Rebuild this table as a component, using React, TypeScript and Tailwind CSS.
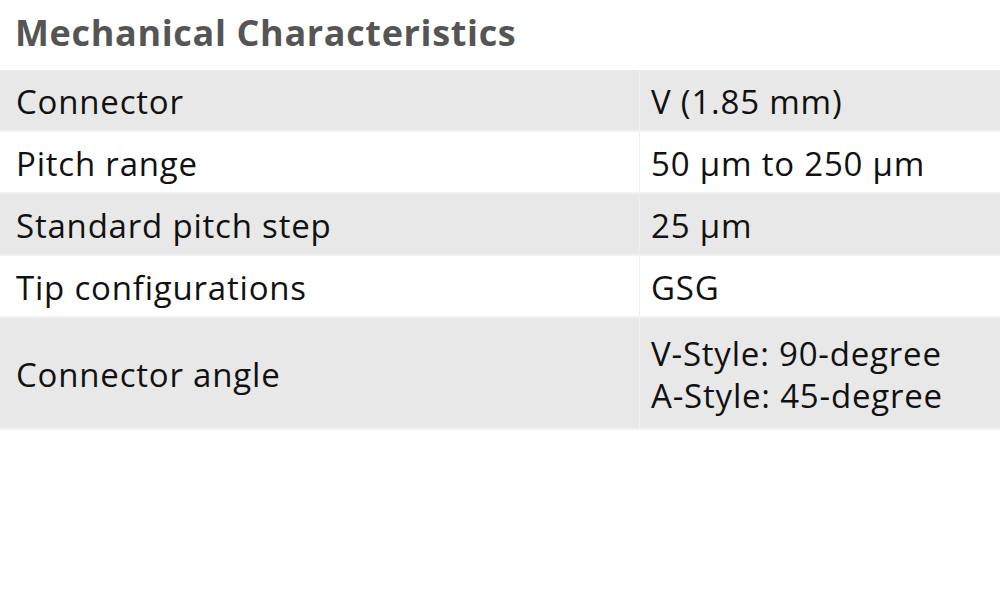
import React from "react";

const rows: { k: string; v: string[]; tall?: boolean }[] = [
  { k: "Connector", v: ["V (1.85 mm)"] },
  { k: "Pitch range", v: ["50 µm to 250 µm"] },
  { k: "Standard pitch step", v: ["25 µm"] },
  { k: "Tip configurations", v: ["GSG"] },
  { k: "Connector angle", v: ["V-Style: 90-degree", "A-Style: 45-degree"], tall: true },
];

export default function App() {
  return (
    <div className="w-[1000px] h-[600px] bg-white" style={{ fontFamily: '"Open Sans", "Noto Sans", sans-serif' }}>
      <div className="h-[70px] pl-[15px] pt-[8px] text-[36px] font-bold text-[#555555] tracking-[0.65px] leading-[50px]">
        Mechanical Characteristics
      </div>
      <div className="flex flex-col">
        {rows.map((r, i) => (
          <div
            key={r.k}
            className={`grid grid-cols-[640px_360px] border-b-2 border-[#f2f2f2] ${i % 2 === 0 ? "bg-[#e8e8e8]" : "bg-white"} ${r.tall ? "h-[112px]" : "h-[62px]"}`}
          >
            <div className="flex items-center pl-[16px] pt-[3px] text-[33px] text-[#111111] tracking-[0.8px] border-r border-[#f0f0f0]">
              {r.k}
            </div>
            <div className="flex flex-col justify-center pl-[11px] pt-[3px] text-[33px] text-[#111111] tracking-[0.8px] leading-[42px]">
              {r.v.map((t) => (
                <div key={t}>{t}</div>
              ))}
            </div>
          </div>
        ))}
      </div>
    </div>
  );
}
